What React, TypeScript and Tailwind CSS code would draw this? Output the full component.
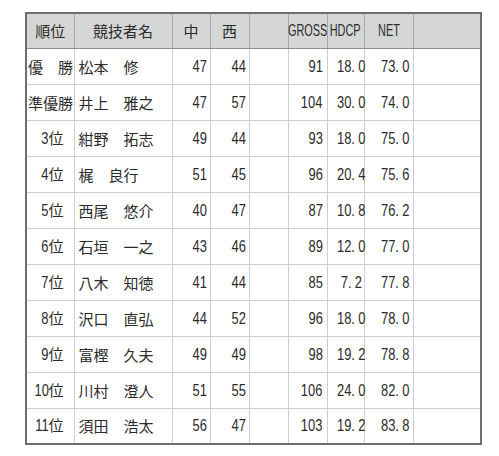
import React from 'react';

type Row = {
  rank: string;
  name: string;
  naka: number;
  nishi: number;
  gross: number;
  hdcp: string;
  net: string;
};

const rows: Row[] = [
  { rank: '優　勝', name: '松本　修', naka: 47, nishi: 44, gross: 91, hdcp: '18.0', net: '73.0' },
  { rank: '準優勝', name: '井上　雅之', naka: 47, nishi: 57, gross: 104, hdcp: '30.0', net: '74.0' },
  { rank: '3位', name: '紺野　拓志', naka: 49, nishi: 44, gross: 93, hdcp: '18.0', net: '75.0' },
  { rank: '4位', name: '梶　良行', naka: 51, nishi: 45, gross: 96, hdcp: '20.4', net: '75.6' },
  { rank: '5位', name: '西尾　悠介', naka: 40, nishi: 47, gross: 87, hdcp: '10.8', net: '76.2' },
  { rank: '6位', name: '石垣　一之', naka: 43, nishi: 46, gross: 89, hdcp: '12.0', net: '77.0' },
  { rank: '7位', name: '八木　知徳', naka: 41, nishi: 44, gross: 85, hdcp: '7.2', net: '77.8' },
  { rank: '8位', name: '沢口　直弘', naka: 44, nishi: 52, gross: 96, hdcp: '18.0', net: '78.0' },
  { rank: '9位', name: '富樫　久夫', naka: 49, nishi: 49, gross: 98, hdcp: '19.2', net: '78.8' },
  { rank: '10位', name: '川村　澄人', naka: 51, nishi: 55, gross: 106, hdcp: '24.0', net: '82.0' },
  { rank: '11位', name: '須田　浩太', naka: 56, nishi: 47, gross: 103, hdcp: '19.2', net: '83.8' },
];

const jp = "font-['Noto_Sans_CJK_JP','Noto_Sans_CJK_SC',sans-serif]";
const latin = "font-['Liberation_Sans',Arial,sans-serif]";

// narrow digits, like the half-width gothic digits of the print
const Num = ({ v }: { v: string }) => {
  const parts = v.split('.');
  return (
    <span className={`inline-block origin-right scale-x-[0.76] text-[17px] ${latin}`}>
      {parts[0]}
      {parts.length > 1 && (
        <>
          <span className="inline-block w-[9px] text-left">.</span>
          {parts[1]}
        </>
      )}
    </span>
  );
};

const Rank = ({ r }: { r: string }) => {
  const m = r.match(/^(\d+)(位)$/);
  if (!m) return <span className="block pl-[1px] text-left whitespace-nowrap">{r}</span>;
  return (
    <span className="block pr-[10px] text-right whitespace-nowrap">
      <Num v={m[1]} />
      {m[2]}
    </span>
  );
};

const Head = ({ t }: { t: string }) => (
  <div className="flex justify-center">
    <span className={`inline-block shrink-0 origin-center scale-x-[0.64] text-[17px] ${latin}`}>{t}</span>
  </div>
);

export default function App() {
  const th = 'border border-[#a9a9a9] border-b-[#8e8e8e] bg-[#d5d7d7] font-normal p-0';
  const td = 'border border-[#cdcdcd] p-0 h-[36px]';
  return (
    <div className={`bg-white min-h-[456px] w-[499px] pt-[12px] pl-[25px] text-[#2b2b2b] ${jp}`}>
      <table className="table-fixed border-collapse border-2 border-[#6e6e6e] w-[455px] text-[15px] leading-none">
        <colgroup>
          <col className="w-[48px]" />
          <col className="w-[98px]" />
          <col className="w-[38px]" />
          <col className="w-[39px]" />
          <col className="w-[39px]" />
          <col className="w-[39px]" />
          <col className="w-[37px]" />
          <col className="w-[49px]" />
          <col className="w-[68px]" />
        </colgroup>
        <thead>
          <tr className="h-[35px]">
            <th className={th}>順位</th>
            <th className={th}>競技者名</th>
            <th className={th}>中</th>
            <th className={th}>西</th>
            <th className={th}></th>
            <th className={th}><Head t="GROSS" /></th>
            <th className={th}><Head t="HDCP" /></th>
            <th className={th}><Head t="NET" /></th>
            <th className={th}></th>
          </tr>
        </thead>
        <tbody>
          {rows.map((r) => (
            <tr key={r.rank}>
              <td className={`${td} overflow-visible`}><Rank r={r.rank} /></td>
              <td className={`${td} pl-[4px] whitespace-nowrap`}>{r.name}</td>
              <td className={`${td} pr-[3px] text-right`}><Num v={String(r.naka)} /></td>
              <td className={`${td} pr-[3px] text-right`}><Num v={String(r.nishi)} /></td>
              <td className={td}></td>
              <td className={`${td} pr-[4px] text-right`}><Num v={String(r.gross)} /></td>
              <td className={`${td} pr-[2px] text-right whitespace-nowrap`}><Num v={r.hdcp} /></td>
              <td className={`${td} pr-[3px] text-right whitespace-nowrap`}><Num v={r.net} /></td>
              <td className={td}></td>
            </tr>
          ))}
        </tbody>
      </table>
    </div>
  );
}
